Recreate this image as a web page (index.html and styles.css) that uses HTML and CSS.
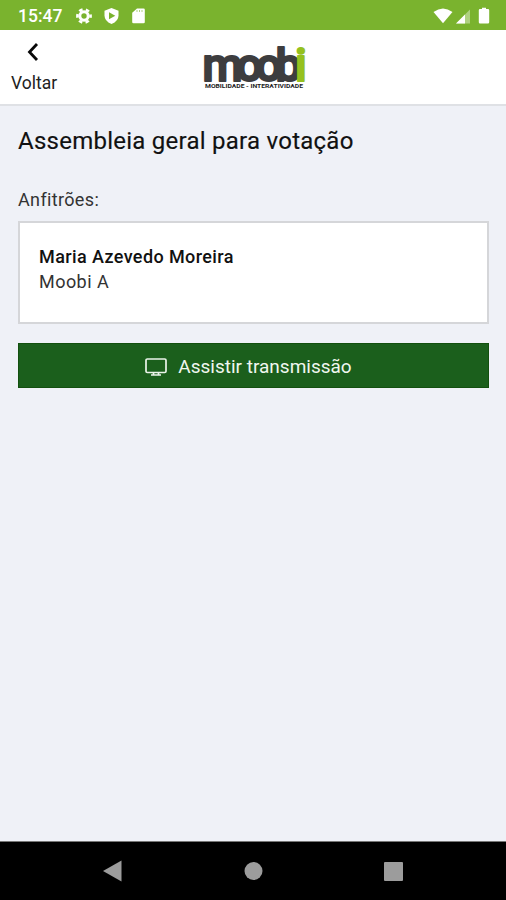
FILE: index.html
```html
<!DOCTYPE html>
<html lang="pt-BR">
<head>
<meta charset="utf-8">
<title>Moobi</title>
<link rel="stylesheet" href="styles.css">
</head>
<body>
<div class="status">
  <span class="clock">15:47</span>
  <svg class="notifications" width="72" height="20" viewBox="0 0 72 20" fill="#fff">
    <circle cx="8" cy="10" r="4.2" fill="none" stroke="#fff" stroke-width="3"/>
    <circle cx="8" cy="10" r="6.6" fill="none" stroke="#fff" stroke-width="2.6" stroke-dasharray="3.6 3.31" stroke-dashoffset="1.8"/>
    <path d="M35.500 2 L42.500 4.700 V9.500 Q42.500 15.200 35.500 18 Q28.500 15.200 28.500 9.500 V4.700 Z"/>
    <path d="M33 6.300 L39.300 9.800 L33 13.300 Z" fill="#7ab32e"/>
    <path d="M61 2.500 H67.500 Q68.800 2.500 68.800 3.800 V16 Q68.800 17.300 67.500 17.300 H57.500 Q56.200 17.300 56.200 16 V6.800 Z"/>
    <path d="M61 4 V6 M63.500 4 V6 M66 4 V6" stroke="#7ab32e" stroke-width=".6"/>
  </svg>
  <svg class="signals" width="58" height="20" viewBox="0 0 58 20" fill="#fff">
    <path d="M-0.500 6 Q9 -1 18.500 6 L9 17.200 Z"/>
    <path d="M36 3.500 V17.500 H22 Z" opacity=".4"/>
    <path d="M31 8.500 V17.500 H22 Z"/>
    <path d="M48 3 V1.700 H52 V3 H54 Q55.200 3 55.200 4.200 V16.300 Q55.200 17.500 54 17.500 H46 Q44.800 17.500 44.800 16.300 V4.200 Q44.800 3 46 3 Z"/>
  </svg>
</div>
<header class="header">
  <div class="back">
    <svg width="14" height="20" viewBox="0 0 14 20"><path d="M11 2 L3.500 10 L11 18" fill="none" stroke="#080808" stroke-width="2.800"/></svg>
    <span>Voltar</span>
  </div>
  <svg class="logo" width="104" height="50" viewBox="0 0 104 50">
    <text class="word" x="-1.500" y="40">moob<tspan class="green">i</tspan></text>
    <text class="tagline" x="1" y="47.300" textLength="98" lengthAdjust="spacingAndGlyphs">MOBILIDADE - INTERATIVIDADE</text>
  </svg>
</header>
<main class="content">
  <h1>Assembleia geral para votação</h1>
  <p class="label">Anfitrões:</p>
  <section class="card">
    <strong>Maria Azevedo Moreira</strong>
    <span>Moobi A</span>
  </section>
  <button class="watch">
    <svg width="22" height="20" viewBox="0 0 22 20" fill="none" stroke="#eaf4e9" stroke-width="1.700"><rect x="1" y="2" width="20" height="13.500" rx="1.300"/><path d="M8.500 15.500 V18 M13.500 15.500 V18 M6 18 H16"/></svg>
    <span>Assistir transmissão</span>
  </button>
</main>
<nav class="navbar">
  <svg width="506" height="58" viewBox="0 0 506 58" fill="#9c9c9c">
    <path d="M103 29 L121.500 18.500 V39.500 Z"/><circle cx="253.500" cy="29" r="9"/><rect x="384" y="20" width="19" height="19" rx="1"/>
  </svg>
</nav>
</body>
</html>
```
FILE: styles.css
```css
* { box-sizing: border-box; }
body {
  margin: 0;
  width: 506px;
  height: 900px;
  display: flex;
  flex-direction: column;
  overflow: hidden;
  background: #eff1f7;
  font-family: Roboto, "Liberation Sans", sans-serif;
  color: #111;
}
svg { display: block; flex: none; }
.status {
  height: 30px;
  background: #7ab32e;
  color: #fff;
  display: flex;
  align-items: center;
  padding: 1px 14px 0 18px;
}
.clock { width: 58px; font-size: 17.5px; font-weight: 500; line-height: 20px; white-space: nowrap; }
.signals { margin-left: auto; overflow: visible; }
.header {
  height: 76px;
  background: #fff;
  border-bottom: 2px solid #dfe1e5;
  display: flex;
}
.back {
  width: 204px;
  padding: 12px 0 0 11px;
  font-size: 17.500px;
  line-height: 22px;
  color: #222;
}
.back svg { margin: 0 0 10px 15px; }
.back span { font-weight: 400; }
.logo { margin-top: 11px; overflow: visible; }
.word { font-size: 46px; font-weight: 500; letter-spacing: -6.4px; fill: #3d3d3f; stroke: #3d3d3f; stroke-width: 2.2; stroke-linejoin: round; }
.green { fill: #95c11f; stroke: #95c11f; }
.tagline { font-size: 5px; font-weight: 700; fill: #222; }
.content { flex: 1; padding: 20px 17px 0 18px; }
h1 { margin: 0; font-size: 24px; line-height: 31px; font-weight: 400; letter-spacing: .25px; -webkit-text-stroke: .15px #111; }
.label { margin: 31px 0 10px; font-size: 18px; line-height: 23px; color: #333; font-weight: 400; letter-spacing: .35px; }
.card {
  height: 103px;
  border: 2px solid #d5d6d9;
  background: #fff;
  padding: 21px 19px;
  display: flex;
  flex-direction: column;
  font-size: 18px;
  line-height: 25px;
  letter-spacing: .4px;
}
.card strong { font-weight: 500; }
.card span { font-weight: 400; color: #333; letter-spacing: .45px; }
.watch {
  width: 100%;
  height: 45px;
  margin: 19px 0 0;
  padding: 2px 10px 0 0;
  border: 1px solid #13500f;
  background: #1b5f1c;
  color: #f0f7ef;
  font: 400 19px/24px Roboto, sans-serif;
  display: flex;
  align-items: center;
  justify-content: center;
  gap: 11px;
}
.navbar { height: 59px; background: #000; border-top: 1px solid #777; }
```
